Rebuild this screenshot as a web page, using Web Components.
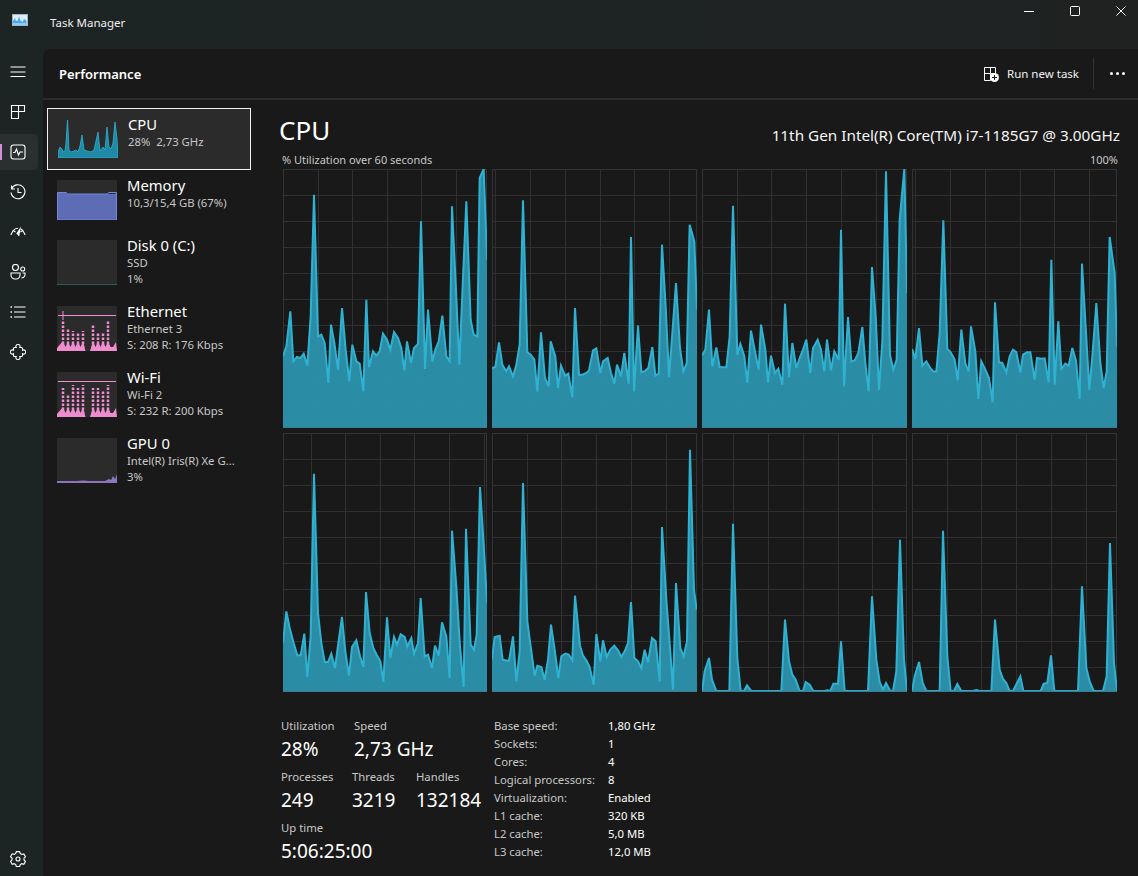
<!DOCTYPE html>
<html lang="en">
<head>
<meta charset="utf-8">
<title>Task Manager</title>
<style>
  html, body { margin: 0; height: 100%; overflow: hidden; background: #1c2323; }
  body { font-family: "Noto Sans", "Open Sans", sans-serif; color: #fff; }
</style>
</head>
<body>
<task-manager>
  <title-bar slot="top">Task Manager</title-bar>
  <nav-rail slot="rail"></nav-rail>
  <page-header slot="header">Performance</page-header>
  <perf-list slot="list">
    <perf-item selected h="62">
      <perf-thumb slot="thumb" kind="cpu" h="39"></perf-thumb>
      <span slot="name">CPU</span>
      <span>28%&nbsp; 2,73 GHz</span>
    </perf-item>
    <perf-item h="60">
      <perf-thumb slot="thumb" kind="memory" h="40"></perf-thumb>
      <span slot="name">Memory</span>
      <span>10,3/15,4 GB (67%)</span>
    </perf-item>
    <perf-item h="66">
      <perf-thumb slot="thumb" kind="disk" h="45"></perf-thumb>
      <span slot="name">Disk 0 (C:)</span>
      <span>SSD</span>
      <span>1%</span>
    </perf-item>
    <perf-item h="66">
      <perf-thumb slot="thumb" kind="ethernet" h="45"></perf-thumb>
      <span slot="name">Ethernet</span>
      <span>Ethernet 3</span>
      <span>S: 208 R: 176 Kbps</span>
    </perf-item>
    <perf-item h="66">
      <perf-thumb slot="thumb" kind="wifi" h="45"></perf-thumb>
      <span slot="name">Wi-Fi</span>
      <span>Wi-Fi 2</span>
      <span>S: 232 R: 200 Kbps</span>
    </perf-item>
    <perf-item h="66">
      <perf-thumb slot="thumb" kind="gpu" h="45"></perf-thumb>
      <span slot="name">GPU 0</span>
      <span>Intel(R) Iris(R) Xe G...</span>
      <span>3%</span>
    </perf-item>
  </perf-list>
  <cpu-detail slot="detail">
    <cpu-chart slot="charts" series="0" grid="35 69 104 138 173"></cpu-chart>
    <cpu-chart slot="charts" series="1" grid="3 38 73 108 142 177"></cpu-chart>
    <cpu-chart slot="charts" series="2" grid="35 69 104 139 174"></cpu-chart>
    <cpu-chart slot="charts" series="3" grid="3 38 73 108 142 177"></cpu-chart>
    <cpu-chart slot="charts" series="4" grid="28 62 97 131 166 201"></cpu-chart>
    <cpu-chart slot="charts" series="5" grid="35 69 104 139 174"></cpu-chart>
    <cpu-chart slot="charts" series="6" grid="31 66 101 136 170"></cpu-chart>
    <cpu-chart slot="charts" series="7" grid="35 69 104 139 174"></cpu-chart>

    <stat-row slot="stats">
      <stat-block w="73" label="Utilization">28%</stat-block>
      <stat-block label="Speed">2,73 GHz</stat-block>
    </stat-row>
    <stat-row slot="stats">
      <stat-block w="71" label="Processes">249</stat-block>
      <stat-block w="64" label="Threads">3219</stat-block>
      <stat-block label="Handles">132184</stat-block>
    </stat-row>
    <stat-row slot="stats">
      <stat-block label="Up time">5:06:25:00</stat-block>
    </stat-row>

    <spec-row slot="specs" label="Base speed:">1,80 GHz</spec-row>
    <spec-row slot="specs" label="Sockets:">1</spec-row>
    <spec-row slot="specs" label="Cores:">4</spec-row>
    <spec-row slot="specs" label="Logical processors:">8</spec-row>
    <spec-row slot="specs" label="Virtualization:">Enabled</spec-row>
    <spec-row slot="specs" label="L1 cache:">320 KB</spec-row>
    <spec-row slot="specs" label="L2 cache:">5,0 MB</spec-row>
    <spec-row slot="specs" label="L3 cache:">12,0 MB</spec-row>
  </cpu-detail>
</task-manager>

<script>
// Traced from the reference, 3x crop coordinates: x, y, x, y ...
const SERIES = [
  { ox: 40, top: 28, w: 204, pts: [40,590,50,560,62,455,71,605,82,592,92,595,102,582,113,618,123,470,133,105,145,530,155,525,165,550,176,670,184,495,194,550,205,630,217,445,228,570,239,665,248,555,260,605,270,612,281,695,290,420,298,622,310,575,320,588,330,575,340,522,352,540,362,570,373,517,385,535,395,565,404,632,412,545,424,610,433,565,445,553,454,185,466,628,475,450,488,605,497,570,507,545,518,468,530,590,540,605,547,140,558,370,569,615,578,400,590,125,603,480,612,525,623,530,630,55,642,28,652,300] },
  { ox: 7, top: 28, w: 205, pts: [7,625,17,622,28,548,38,615,50,635,58,620,70,650,80,615,90,555,100,122,113,578,123,585,134,600,143,695,154,518,166,655,177,680,183,545,197,590,205,685,214,618,226,648,236,642,248,712,256,445,268,645,278,645,290,640,298,632,310,572,320,566,332,640,340,605,354,595,364,640,374,672,382,615,394,650,404,580,417,672,424,232,433,695,445,498,455,637,465,635,476,625,488,562,497,648,507,642,517,255,528,440,538,652,548,520,559,370,571,565,581,635,591,612,600,195,614,245,622,450] },
  { ox: 7, top: 28, w: 205, pts: [7,587,17,570,28,450,38,620,50,563,60,622,70,623,80,623,90,530,100,138,113,585,122,553,134,590,143,670,154,513,166,575,177,630,184,495,197,570,205,668,214,588,226,640,236,627,248,675,256,432,268,652,278,550,290,625,300,595,310,570,320,540,332,640,340,565,354,540,364,570,374,635,382,540,394,632,404,575,417,600,424,210,433,680,445,472,455,605,465,602,476,580,488,502,497,610,507,695,517,322,528,470,538,690,548,545,559,35,571,585,581,630,591,600,600,180,614,28,622,400] },
  { ox: 637, top: 28, w: 205, pts: [637,568,647,598,658,505,668,618,680,605,690,622,700,635,710,636,720,520,731,182,743,568,753,578,765,600,774,662,785,510,797,612,807,635,814,500,827,575,836,718,845,605,857,630,868,655,879,728,886,428,898,608,908,610,920,638,930,590,940,570,950,577,962,638,970,585,982,578,992,578,1005,660,1012,595,1025,597,1035,596,1047,668,1055,300,1065,675,1076,485,1085,628,1097,612,1107,618,1118,565,1129,603,1140,718,1147,312,1158,500,1169,690,1178,590,1190,430,1202,610,1212,685,1221,635,1230,232,1245,340,1252,560] },
  { ox: 25, top: 10, w: 204, pts: [25,640,35,545,45,595,57,640,68,677,78,677,89,612,98,742,108,620,118,132,130,550,140,640,150,697,160,697,170,672,181,715,191,640,202,562,212,665,223,738,232,652,245,632,256,680,266,712,274,487,285,610,296,655,306,675,317,695,326,757,337,563,347,685,358,622,367,645,378,614,390,622,398,650,410,625,418,672,430,640,438,505,450,680,460,675,472,715,481,648,492,678,502,578,515,620,525,745,532,303,545,470,556,650,567,772,574,297,588,645,598,660,606,615,616,172,628,360,637,520] },
  { ox: 652, top: 10, w: 205, pts: [652,690,660,622,675,618,684,690,703,694,715,620,725,755,735,665,745,160,758,575,768,650,780,738,788,708,800,712,810,750,820,690,829,585,840,660,851,745,860,680,872,672,882,675,893,692,901,498,916,648,925,678,935,692,945,712,957,765,965,613,977,695,985,632,996,682,1007,660,1019,648,1030,662,1040,682,1050,665,1060,640,1069,517,1079,685,1090,695,1100,715,1110,660,1120,698,1132,625,1143,635,1155,755,1162,292,1175,510,1185,640,1195,780,1204,460,1217,655,1227,680,1237,635,1246,60,1258,480,1266,540] },
  { ox: 22, top: 10, w: 205, pts: [22,785,30,725,43,685,52,750,65,785,104,785,115,282,128,685,138,785,148,785,157,767,170,785,260,785,271,570,283,695,293,735,303,750,315,785,325,785,333,757,345,765,356,785,390,785,398,782,407,785,416,762,430,762,439,635,450,785,520,785,532,500,545,690,555,757,565,780,574,760,587,785,595,785,605,725,616,330,628,690,637,785] },
  { ox: 652, top: 10, w: 205, pts: [652,785,660,740,673,697,684,760,695,785,735,785,745,303,758,680,768,785,778,785,788,763,800,785,835,785,845,781,855,785,890,785,901,570,915,720,925,748,935,760,945,785,955,785,977,740,986,785,1038,785,1047,762,1058,760,1069,677,1079,785,1150,785,1162,470,1175,715,1185,755,1197,785,1225,785,1236,740,1246,340,1258,700,1267,785] },
];

class TaskManager extends HTMLElement {
  constructor() {
    super();
    this.attachShadow({ mode: 'open' });
    this.shadowRoot.innerHTML = `
      <style>
        :host { display: flex; flex-direction: column; height: 100vh; background: linear-gradient(90deg, #1c2424, #202222); }
        .body { flex: 1; display: flex; min-height: 0; }
        .main { flex: 1; min-width: 0; display: flex; flex-direction: column; background: #191919; border-top-left-radius: 8px; }
        .content { flex: 1; display: flex; min-height: 0; }
      </style>
      <slot name="top"></slot>
      <div class="body">
        <slot name="rail"></slot>
        <div class="main">
          <slot name="header"></slot>
          <div class="content">
            <slot name="list"></slot>
            <slot name="detail"></slot>
          </div>
        </div>
      </div>`;
  }
}

class TitleBar extends HTMLElement {
  constructor() {
    super();
    this.attachShadow({ mode: 'open' });
    this.shadowRoot.innerHTML = `
      <style>
        :host { display: flex; height: 49px; align-items: flex-start; font-size: 11.5px; color: #f0f0f0; }
        .app { margin: 14px 0 0 12px; display: block; }
        .name { margin: 14px 0 0 22px; line-height: 17px; flex: 1; }
        .ctl { display: flex; margin-right: -6px; }
        .ctl div { width: 46px; height: 22px; display: flex; align-items: center; justify-content: center; }
        svg.c { fill: none; stroke: #fff; stroke-width: 1; }
      </style>
      <svg class="app" width="16" height="12" viewBox="0 0 16 12">
        <rect width="16" height="12" fill="#a9b4bf"/>
        <rect x="1" y="1" width="14" height="10" fill="#d9eefc"/>
        <path d="M1 11V7l2-3 1 3 2-.5 1-4 1.500 4 2 1.500 1.500-3 2.500 1.500V11z" fill="#4aa6ee"/>
        <path d="M1 11V9h14v2z" fill="#8ccbf7"/>
      </svg>
      <div class="name"><slot></slot></div>
      <div class="ctl">
        <div><svg class="c" width="10" height="10"><path d="M0 5.500h10"/></svg></div>
        <div><svg class="c" width="10" height="10"><rect x=".5" y=".5" width="9" height="9" rx="1"/></svg></div>
        <div><svg class="c" width="10" height="10"><path d="M.5 .5l9 9M9.500 .5l-9 9"/></svg></div>
      </div>`;
  }
}

const NAV_ICONS = {
  menu: '<path d="M.5 3h15M.5 8h15M.5 12.500h15"/>',
  processes: '<path d="M1.500 1.500h13v6h-6v7h-7zM1.500 7.500h7M8.500 1.500v6"/>',
  performance: '<rect x="1" y="1" width="14" height="14" rx="2.500"/><path d="M3 8.500h2l1.500-3.500 2 6 1.500-3h3"/>',
  history: '<path d="M1.500 1.500v3.500h3.500M1.500 5A7 7 0 1 1 1 8.500M8 4v4.500h3.500"/>',
  startup: '<path d="M.8 11l2.400-4.500 2.300 1.500M15.200 11l-2.400-4.500-2.300 1.500M3.200 6.500A7 7 0 0 1 8 4.200M12.800 6.500a7 7 0 0 0-2-1.500"/><path d="M11 2.500L9.200 12.500 6.300 9.500z" fill="#fff" stroke="none"/>',
  users: '<circle cx="5.500" cy="3.500" r="3"/><circle cx="12.700" cy="5" r="2"/><path d="M1 9h9v2a4 4 0 0 1-4 4H5a4 4 0 0 1-4-4zM12.500 9H15v1.500a3.500 3.500 0 0 1-3.500 3.500"/>',
  details: '<path d="M4 3h11.500M4 8h11.500M4 13h11.500"/><path d="M.500 3h1.500M.500 8h1.500M.500 13h1.500" stroke-width="1.500"/>',
  services: '<path d="M6.200 3.500A2.100 2.100 0 1 1 9.800 3.500H11.500A1 1 0 0 1 12.500 4.500V6.200A2.100 2.100 0 1 1 12.500 9.800V11.500A1 1 0 0 1 11.500 12.500H9.800A2.100 2.100 0 1 1 6.200 12.500H4.500A1 1 0 0 1 3.500 11.500V9.800A2.100 2.100 0 1 1 3.500 6.200V4.500A1 1 0 0 1 4.500 3.500Z"/>',
  settings: '<circle cx="8" cy="8" r="2"/><path d="M6.300 1.200h3.400l.5 2 1.600.9 2-.6 1.700 2.900-1.500 1.400v1.800l1.500 1.400-1.700 2.900-2-.6-1.600.9-.5 2H6.300l-.5-2-1.600-.9-2 .6L.5 10.900 2 9.500V7.700L.5 6.300l1.700-2.900 2 .6 1.600-.9z" transform="translate(0 -.6)"/>',
};

class NavRail extends HTMLElement {
  constructor() {
    super();
    this.attachShadow({ mode: 'open' });
    const names = ['menu', 'processes', 'performance', 'history', 'startup', 'users', 'details', 'services'];
    const button = (name) => `
      <div class="btn ${name}">
        <svg width="16" height="16" viewBox="0 0 16 16">${NAV_ICONS[name]}</svg>
      </div>`;
    this.shadowRoot.innerHTML = `
      <style>
        :host { display: flex; flex-direction: column; width: 43px; flex: none; padding-top: 3px; box-sizing: border-box; }
        .btn { height: 36px; margin: 2px 5px 2px 0; display: flex; align-items: center; justify-content: center; position: relative; border-radius: 0 5px 5px 0; }
        svg { fill: none; stroke: #fff; stroke-width: 1.100; margin-right: 2px; }
        .performance { background: #2a3030; }
        .performance::before { content: ""; position: absolute; left: 0; top: 10px; width: 2px; height: 16px; background: #d58fd8; }
        .settings { margin: auto 5px 0 0; height: 34px; }
      </style>
      ${names.map(button).join('')}
      ${button('settings')}`;
  }
}

class PageHeader extends HTMLElement {
  constructor() {
    super();
    this.attachShadow({ mode: 'open' });
    this.shadowRoot.innerHTML = `
      <style>
        :host { display: flex; align-items: center; height: 49px; flex: none; border-bottom: 2px solid #2b2b2b; padding: 0 12px 0 16px; }
        .title { flex: 1; font-size: 13px; font-weight: 600; }
        .run { display: flex; align-items: center; gap: 8px; font-size: 11.500px; color: #f2f2f2; }
        .sep { width: 1px; height: 31px; background: #333; margin: 0 16px 0 14px; }
        .more { display: flex; gap: 3px; width: 16px; }
        .more i { width: 3px; height: 3px; border-radius: 50%; background: #fff; }
      </style>
      <div class="title"><slot></slot></div>
      <div class="run">
        <svg width="16" height="16" viewBox="0 0 16 16" fill="none" stroke="#fff">
          <path d="M1.500 1.500h11v6h-5v7h-6zM1.500 7.500h6M7.500 1.500v6"/>
          <circle cx="11.500" cy="11.500" r="4.500" fill="#fff" stroke="none"/>
          <path d="M11.500 9v5M9 11.500h5" stroke="#191919"/>
        </svg>
        <span>Run new task</span>
      </div>
      <div class="sep"></div>
      <div class="more"><i></i><i></i><i></i></div>`;
  }
}

class PerfList extends HTMLElement {
  constructor() {
    super();
    this.attachShadow({ mode: 'open' });
    this.shadowRoot.innerHTML = `
      <style>
        :host { display: flex; flex-direction: column; flex: none; width: 236px; box-sizing: border-box; padding: 8px 28px 0 4px; }
      </style>
      <slot></slot>`;
  }
}

class PerfItem extends HTMLElement {
  constructor() {
    super();
    this.attachShadow({ mode: 'open' });
    this.shadowRoot.innerHTML = `
      <style>
        :host { display: flex; box-sizing: border-box; gap: 10px; padding: 10px 0 0 10px; height: ${this.getAttribute('h')}px; }
        :host([selected]) { background: #2b2b2b; outline: 1px solid #f2f2f2; outline-offset: -1px; padding: 11px 0 0 11px; }
        .text { margin-top: -4px; display: flex; flex-direction: column; min-width: 0; white-space: nowrap; }
        .name { font-size: 14.800px; line-height: 19px; color: #fff; }
        .sub { font-size: 11.300px; line-height: 16px; color: #c8c8c8; display: flex; flex-direction: column; }
      </style>
      <slot name="thumb"></slot>
      <div class="text">
        <div class="name"><slot name="name"></slot></div>
        <div class="sub"><slot></slot></div>
      </div>`;
  }
}

const THUMBS = {
  cpu: () => `<svg viewBox="0 0 60 39" width="60" height="39">
      <polygon points="0,39 0,33 2,28 4,30 5,33 7,32 8,24 9.500,1 11,31 13,33 16,32 18,31 20,33 22,27 24,16 26,31 29,32 33,33 36,31 40,13 42,32 45,28 47,31 49,8 51,28 53,30 55,24 57,3 59,20 60,39" fill="#1f8aa6" stroke="#2db4d4" stroke-width=".8"/>
    </svg>`,
  memory: () => `<svg viewBox="0 0 60 40" width="60" height="40">
      <path d="M0 13h9l1 1h48l1-1h1v27H0z" fill="#5e6cb6"/>
      <path d="M.5 40V12.500h9l1 1.500h40l1-1.500h8V40z" fill="none" stroke="#7486e0"/>
    </svg>`,
  disk: () => `<svg viewBox="0 0 60 45" width="60" height="45"><path d="M0 44.500h60" stroke="#2f5a58"/></svg>`,
  ethernet: () => spikes([15, 23, 25, 27, 25, 18, 27, 27, 15], true),
  wifi: () => spikes([16, 22, 13, 16, 13, 16, 16, 18, 13], false),
  gpu: () => `<svg viewBox="0 0 60 45" width="60" height="45">
      <path d="M0 45v-2h20l6-.5 6 .5h16l4-2 2 1 2-4 2 3 2-5v9z" fill="#8d75bd"/>
    </svg>`,
};

function spikes(tops, stub) {
  const xs = [6, 11, 16, 21, 26, 36, 41, 46, 51];
  const lines = xs.map((x, i) =>
    `<path d="M${x} 42V${tops[i]}" stroke="#ee8cce" stroke-width="2.500" stroke-dasharray="2.500 1.500"/>`).join('');
  const base = ['0,45', '0,42'];
  xs.forEach((x) => {
    base.push(`${x},35`, `${x + 2.5},${x === 26 ? 45 : 41}`);
    if (x === 26) base.push('33,45');
  });
  base.push('56,41', '59,36', '60,45');
  return `<svg viewBox="0 0 60 45" width="60" height="45">
      ${lines}
      <polygon points="${base.join(' ')}" fill="#ee8cce"/>
      <path d="M1 9.500h58" stroke="#f08fd0"/>
      ${stub ? '<path d="M6 5v9" stroke="#f08fd0"/>' : ''}
    </svg>`;
}

class PerfThumb extends HTMLElement {
  constructor() {
    super();
    this.attachShadow({ mode: 'open' });
    const h = this.getAttribute('h');
    this.shadowRoot.innerHTML = `
      <style>
        :host { display: block; flex: none; width: 60px; height: ${h}px; background: #2b2b2b; }
        svg { display: block; }
      </style>
      ${THUMBS[this.getAttribute('kind')]()}`;
  }
}

class CpuDetail extends HTMLElement {
  constructor() {
    super();
    this.attachShadow({ mode: 'open' });
    this.shadowRoot.innerHTML = `
      <style>
        :host { display: flex; flex-direction: column; flex: 1; min-width: 0; box-sizing: border-box; padding: 10px 18px 0 0; }
        .head { display: flex; justify-content: space-between; align-items: flex-end; height: 43px; }
        .head h1 { margin: 2px 0 0; align-self: flex-start; font-size: 26px; line-height: 36px; font-weight: 400; }
        .head span { font-size: 15.300px; line-height: 20px; margin-bottom: 8px; color: #f5f5f5; }
        .scale { display: flex; justify-content: space-between; font-size: 11px; line-height: 14px; height: 16px; color: #c8c8c8; margin: 0 2px 0 3px; }
        .charts { display: grid; grid-template-columns: 204px 205px 205px 205px; grid-template-rows: 259px 259px; gap: 5px; margin-left: 4px; }
        .bottom { display: flex; margin-top: 25px; padding-left: 2px; }
        .stats { width: 213px; flex: none; display: flex; flex-direction: column; gap: 5px; }
        .specs { display: flex; flex-direction: column; }
      </style>
      <div class="head"><h1>CPU</h1><span>11th Gen Intel(R) Core(TM) i7-1185G7 @ 3.00GHz</span></div>
      <div class="scale"><span>% Utilization over 60 seconds</span><span>100%</span></div>
      <div class="charts"><slot name="charts"></slot></div>
      <div class="bottom">
        <div class="stats"><slot name="stats"></slot></div>
        <div class="specs"><slot name="specs"></slot></div>
      </div>`;
  }
}

class CpuChart extends HTMLElement {
  constructor() {
    super();
    this.attachShadow({ mode: 'open' });
    const s = SERIES[+this.getAttribute('series')];
    const W = s.w * 3, H = 259 * 3;
    const pts = [];
    for (let i = 0; i < s.pts.length; i += 2) pts.push(`${s.pts[i] - s.ox},${Math.min(s.pts[i + 1] - s.top, H - 3)}`);
    let grid = '';
    for (let y = 0; y < 259; y += 26) grid += `<path d="M0 ${y * 3 + 1.500}H${W}"/>`;
    this.getAttribute('grid').split(' ').forEach((x) => { grid += `<path d="M${x * 3 + 1.500} 0V${H}"/>`; });
    this.shadowRoot.innerHTML = `
      <style>
        :host { display: block; }
        svg { display: block; width: 100%; height: 100%; }
        .grid path { stroke: #303030; stroke-width: 3; }
      </style>
      <svg viewBox="0 0 ${W} ${H}" preserveAspectRatio="none">
        <g class="grid">${grid}</g>
        <rect x="1.500" y="1.500" width="${W - 3}" height="${H - 3}" fill="none" stroke="#333" stroke-width="3"/>
        <polygon points="0,${H} ${pts.join(' ')} ${W},${H}" fill="#2d96b2" fill-opacity=".92"/>
        <polyline points="${pts.join(' ')}" fill="none" stroke="#2fb2d2" stroke-width="6" stroke-linejoin="miter"/>
        <path d="M0 ${H - 1.500}H${W}" stroke="#3d7f92" stroke-width="4"/>
      </svg>`;
  }
}

class StatRow extends HTMLElement {
  constructor() {
    super();
    this.attachShadow({ mode: 'open' });
    this.shadowRoot.innerHTML = `
      <style>:host { display: flex; }</style>
      <slot></slot>`;
  }
}

class StatBlock extends HTMLElement {
  constructor() {
    super();
    this.attachShadow({ mode: 'open' });
    const w = this.getAttribute('w');
    this.shadowRoot.innerHTML = `
      <style>
        :host { display: block; flex: none; ${w ? `width: ${w}px;` : ''} white-space: nowrap; }
        .l { font-size: 11.300px; line-height: 18px; color: #c8c8c8; }
        .v { font-size: 19px; line-height: 28px; color: #fff; }
      </style>
      <div class="l">${this.getAttribute('label')}</div>
      <div class="v"><slot></slot></div>`;
  }
}

class SpecRow extends HTMLElement {
  constructor() {
    super();
    this.attachShadow({ mode: 'open' });
    this.shadowRoot.innerHTML = `
      <style>
        :host { display: flex; height: 18px; line-height: 18px; font-size: 11.300px; white-space: nowrap; }
        .l { width: 114px; color: #c8c8c8; }
        .v { color: #fff; }
      </style>
      <div class="l">${this.getAttribute('label')}</div>
      <div class="v"><slot></slot></div>`;
  }
}

customElements.define('task-manager', TaskManager);
customElements.define('title-bar', TitleBar);
customElements.define('nav-rail', NavRail);
customElements.define('page-header', PageHeader);
customElements.define('perf-list', PerfList);
customElements.define('perf-item', PerfItem);
customElements.define('perf-thumb', PerfThumb);
customElements.define('cpu-detail', CpuDetail);
customElements.define('cpu-chart', CpuChart);
customElements.define('stat-row', StatRow);
customElements.define('stat-block', StatBlock);
customElements.define('spec-row', SpecRow);
</script>
</body>
</html>
